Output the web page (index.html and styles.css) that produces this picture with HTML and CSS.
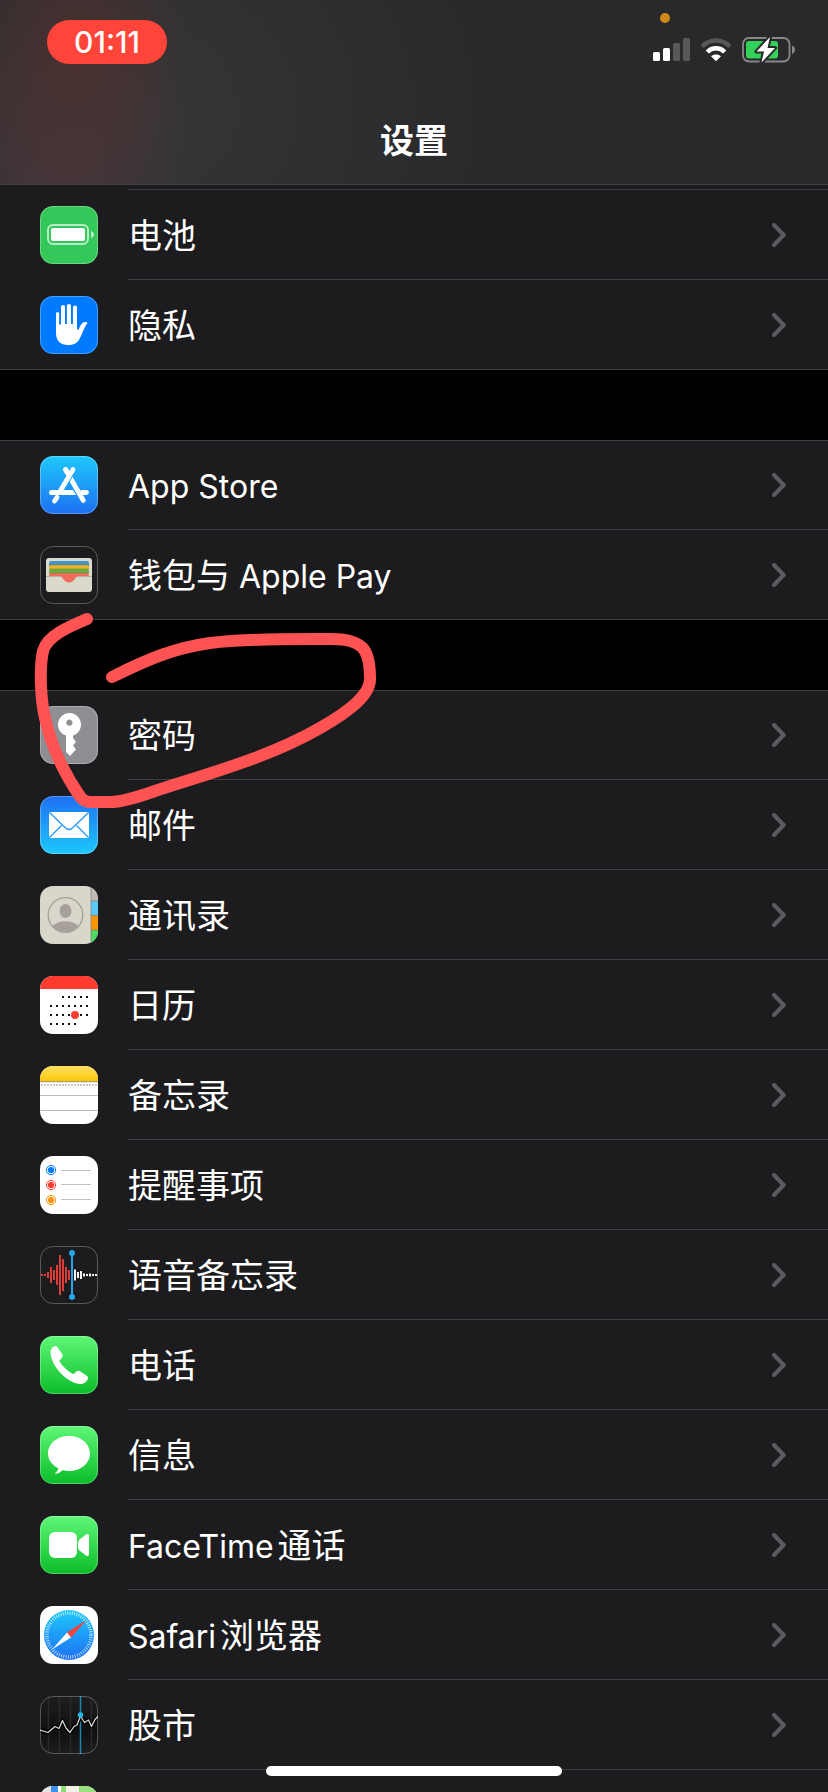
FILE: index.html
```html
<!DOCTYPE html>
<html lang="zh-CN">
<head>
<meta charset="utf-8">
<meta name="viewport" content="width=device-width, initial-scale=1">
<title>设置</title>
<link rel="stylesheet" href="styles.css">
</head>
<body>
<svg class="defs" aria-hidden="true">
  <defs>
    <linearGradient id="g-blue" x1="0" y1="0" x2="0" y2="1"><stop offset="0" stop-color="#1ec8fb"/><stop offset="1" stop-color="#1d70f2"/></linearGradient>
    <linearGradient id="g-notes" x1="0" y1="0" x2="0" y2="1"><stop offset="0" stop-color="#ffe060"/><stop offset="1" stop-color="#fcc60c"/></linearGradient>
    <symbol id="chevron" viewBox="0 0 14 24"><path d="M2 2l9.700 10L2 22" fill="none" stroke="#5b5b60" stroke-width="4" stroke-linecap="round" stroke-linejoin="round"/></symbol>
  </defs>
</svg>
<div class="screen">
  <header class="header">
    <div class="status">
      <span class="clock">01:11</span>
      <span class="mic-dot"></span>
      <div class="indicators">
        <svg width="37" height="24" viewBox="0 0 37 24" role="img" aria-label="信号"><g fill="#fff"><rect y="14" width="7" height="9" rx="1.500"/><rect x="10" y="10" width="7" height="13" rx="1.500"/></g><g fill="#58585a"><rect x="20" y="5" width="7" height="18" rx="1.500"/><rect x="30" width="7" height="23" rx="1.500"/></g></svg>
        <svg width="32" height="24" viewBox="0 0 32 24" role="img" aria-label="Wi-Fi"><path d="M2 8.500C10 .500 22 .500 30 8.500" fill="none" stroke="#58585a" stroke-width="4.500"/><path d="M7.300 14C12 9 20 9 24.700 14" fill="none" stroke="#fff" stroke-width="4.500"/><path d="M11 18.300C13.500 15.900 18.500 15.900 21 18.300L16 23.300Z" fill="#fff"/></svg>
        <svg width="54" height="26" viewBox="0 0 54 26" role="img" aria-label="正在充电"><rect x="1" y="1" width="46.500" height="23.500" rx="6" fill="none" stroke="#88888a" stroke-width="1.800"/><rect x="4" y="4" width="32" height="17.500" rx="3" fill="#32d158"/><path d="M50 8.500c4 1.500 4 7 0 8.500z" fill="#88888a"/><path d="M28 0L14.500 14.500H22L19.500 25.500L33 11H25.500Z" fill="#fff" stroke="#29292b" stroke-width="4" paint-order="stroke" stroke-linejoin="round"/></svg>
      </div>
    </div>
    <h1 class="title">设置</h1>
  </header>

  <main class="content">
    <div class="previous-row"></div>
    <nav class="group group-first">
      <a class="row" href="#battery">
        <svg class="icon ringed green-flat" viewBox="0 0 58 58"><rect x="8" y="19" width="40" height="19" rx="5" fill="none" stroke="#fff" stroke-opacity=".65" stroke-width="2"/><rect x="11" y="22" width="34" height="13" rx="2" fill="#fff"/><path d="M51 25c4 1.500 4 5.500 0 7z" fill="#fff" fill-opacity=".65"/></svg>
        <span class="cell"><span class="label">电池</span><svg class="chevron"><use href="#chevron"/></svg></span>
      </a>
      <a class="row" href="#privacy">
        <svg class="icon ringed blue-flat" viewBox="0 0 58 58"><path fill="#fff" d="M16 17.500a1.600 1.600 0 0 1 3.200 0V28.500h1.800V11a2 2 0 0 1 4 0V28h1.900V10a2 2 0 0 1 4.100 0V28h1.900V11.500a2 2 0 0 1 4.100 0V33l1.500 1C40 30 42 26.500 45 26.100c2-.200 2.900.700 2.300 1.500C44 31.500 42.500 38 39.500 43 37 47.500 33.500 49 28 49c-7.500 0-12-4-12-12z"/></svg>
        <span class="cell"><span class="label">隐私</span><svg class="chevron"><use href="#chevron"/></svg></span>
      </a>
    </nav>

    <nav class="group">
      <a class="row" href="#app-store">
        <svg class="icon ringed sky" viewBox="0 0 58 58"><g fill="none" stroke="#fff" stroke-width="4.800" stroke-linecap="round"><path d="M25.500 13.500L43.300 44.500M42 36.500h4.500"/><path d="M31 16L20.500 34.500" stroke="#1fa2f7" stroke-width="7.500" stroke-linecap="butt"/><path d="M33 13.500L20 35.500M25.500 13.500l3 5M17 41.300L14.500 45"/></g><path d="M11.500 34h21.500l3 5H11.500a2.500 2.500 0 0 1 0-5z" fill="#fff"/></svg>
        <span class="cell"><span class="label"><span class="latin">App Store</span></span><svg class="chevron"><use href="#chevron"/></svg></span>
      </a>
      <a class="row" href="#wallet">
        <svg class="icon ringed dark" viewBox="0 0 58 58"><rect x="6" y="12" width="46" height="34" rx="3" fill="#dbd8cc"/><path d="M9 20v-3q0-2 2-2h36q2 0 2 2v3z" fill="#4595c5"/><path d="M9 23v-2q0-2 2-2h36q2 0 2 2v2z" fill="#eeb12c"/><path d="M9 27v-2q0-2 2-2h36q2 0 2 2v2z" fill="#63b144"/><path d="M9 31v-2q0-2 2-2h36q2 0 2 2v2H37c-2 0-3 5.500-8 5.500S23 31 21 31z" fill="#f16d5e"/><path d="M6 30.500h15M37 30.500h15" stroke="#b5b1a6"/><path d="M9 19h40M9 23h40M9 27h40" stroke="#6b6630" stroke-opacity=".35"/></svg>
        <span class="cell"><span class="label">钱包与<span class="latin"> Apple Pay</span></span><svg class="chevron"><use href="#chevron"/></svg></span>
      </a>
    </nav>

    <nav class="group">
      <a class="row" href="#passwords">
        <svg class="icon ringed gray" viewBox="0 0 58 58"><path fill="#fff" fill-rule="evenodd" d="M26 29.500a11.500 11.500 0 1 1 7 0V32l3 4-3 3.500 3 4-6 6.500-4-4zM29.300 13.600a3.100 3.100 0 1 0 .1 0z"/></svg>
        <span class="cell"><span class="label">密码</span><svg class="chevron"><use href="#chevron"/></svg></span>
      </a>
      <a class="row" href="#mail">
        <svg class="icon ringed mail" viewBox="0 0 58 58"><rect x="9" y="16" width="40" height="26" rx="1.500" fill="#fff"/><path d="M9.500 16.500L24.500 31q4.500 5 9 0L48.500 16.500M9.500 41.500L21.500 29.500M48.500 41.500L36.500 29.500" fill="none" stroke="#2497f6" stroke-width="1.300"/></svg>
        <span class="cell"><span class="label">邮件</span><svg class="chevron"><use href="#chevron"/></svg></span>
      </a>
      <a class="row" href="#contacts">
        <svg class="icon contacts" viewBox="0 0 58 58"><rect x="51" width="7" height="15" fill="#bfbbb1"/><rect x="51" y="15" width="7" height="14.500" fill="#5ac8fa"/><rect x="51" y="29.500" width="7" height="14.500" fill="#ff9500"/><rect x="51" y="44" width="7" height="14" fill="#4cd964"/><path d="M51 0v58M51 15h7M51 29.500h7M51 44h7" stroke="#77736b" stroke-opacity=".6"/><circle cx="25.500" cy="29" r="17.300" fill="none" stroke="#a8a19b" stroke-width="1.300"/><ellipse cx="25.500" cy="25" rx="6" ry="7" fill="#a8a19b"/><path d="M12.500 40c6-6.500 20-6.500 26 0C32 48.500 19 48.500 12.500 40z" fill="#a8a19b"/></svg>
        <span class="cell"><span class="label">通讯录</span><svg class="chevron"><use href="#chevron"/></svg></span>
      </a>
      <a class="row" href="#calendar">
        <svg class="icon white" viewBox="0 0 58 58"><rect width="58" height="13" fill="#ff3b30"/><path d="M22 21h26M10 30h38M10 39h38M10 48h26" fill="none" stroke="#111" stroke-width="2" stroke-dasharray="2 4"/><circle cx="35" cy="39" r="4" fill="#ff3b30"/></svg>
        <span class="cell"><span class="label">日历</span><svg class="chevron"><use href="#chevron"/></svg></span>
      </a>
      <a class="row" href="#notes">
        <svg class="icon white" viewBox="0 0 58 58"><rect width="58" height="15" fill="url(#g-notes)"/><path d="M0 15.500h58" stroke="#b5a060"/><path d="M0 16.500h58" stroke="#e6e4dc"/><path d="M1 19h57" stroke="#c8c8c8" stroke-width="2" stroke-dasharray="2 1"/><path d="M0 29.500h58M0 44.500h58" stroke="#bcbcbe"/></svg>
        <span class="cell"><span class="label">备忘录</span><svg class="chevron"><use href="#chevron"/></svg></span>
      </a>
      <a class="row" href="#reminders">
        <svg class="icon white" viewBox="0 0 58 58"><g fill="#007aff" stroke="#007aff"><circle cx="11" cy="14" r="3.100" stroke="none"/><circle cx="11" cy="14" r="4.600" fill="none"/></g><g fill="#ff3b30" stroke="#ff3b30"><circle cx="11" cy="29" r="3.100" stroke="none"/><circle cx="11" cy="29" r="4.600" fill="none"/></g><g fill="#ff9500" stroke="#ff9500"><circle cx="11" cy="44" r="3.100" stroke="none"/><circle cx="11" cy="44" r="4.600" fill="none"/></g><path d="M21 14.500h30M21 28.500h30M21 43.500h30" stroke="#c0c0c3"/></svg>
        <span class="cell"><span class="label">提醒事项</span><svg class="chevron"><use href="#chevron"/></svg></span>
      </a>
      <a class="row" href="#voice-memos">
        <svg class="icon ringed dark" viewBox="0 0 58 58"><path d="M2 28v2M5 28v2M8 26v6M11 21v16M14 24v10M17 19v20M20 9v40M23 13v32M26 21v16M29 24v10" stroke="#e8403a" stroke-width="1.900"/><path d="M35 23.500v11M38 26v6M41 25v8M44 27.500v3M47 28v2M50 27.500v3M53 28v2M56 28v2" stroke="#fff" stroke-width="1.900"/><path d="M32 7v44" stroke="#22a7ec" stroke-width="2"/><circle cx="32" cy="7" r="3" fill="#22a7ec"/><circle cx="32" cy="51" r="3" fill="#22a7ec"/></svg>
        <span class="cell"><span class="label">语音备忘录</span><svg class="chevron"><use href="#chevron"/></svg></span>
      </a>
      <a class="row" href="#phone">
        <svg class="icon ringed green" viewBox="0 0 58 58"><path fill="#fff" d="M10.500 16c0-2 1-4 3-5.300 1.500-1 3-1 4 .5l4.500 6.500c1 1.500 1 2.500 0 3.800l-2 2.500c-.600.800-.500 1.500 0 2.300 3 4.500 7.500 8.500 12 11.200 1 .600 1.800.500 2.500-.200l2-1.700c1.200-1 2.300-1 3.800-.1l6.700 4.500c1.300 1 1.300 2.200.500 3.700-1.300 2.300-3.500 4-6 4.200C34 48.500 25 42 20 36.500 15 31 10.500 23 10.500 16z"/></svg>
        <span class="cell"><span class="label">电话</span><svg class="chevron"><use href="#chevron"/></svg></span>
      </a>
      <a class="row" href="#messages">
        <svg class="icon ringed green" viewBox="0 0 58 58"><path fill="#fff" d="M29 10c11.800 0 21 7.700 21 17.500S40.800 45 29 45c-2.500 0-4.500-.200-6.500-.800C20.500 46 18 47.700 15.500 47.800c-.5 0-.6-.500-.2-.8 1.700-1.300 2.700-2.500 2.900-4.700C12 39 8 33.800 8 27.500 8 17.700 17.200 10 29 10z"/></svg>
        <span class="cell"><span class="label">信息</span><svg class="chevron"><use href="#chevron"/></svg></span>
      </a>
      <a class="row" href="#facetime">
        <svg class="icon ringed green" viewBox="0 0 58 58"><rect x="9" y="16" width="28" height="26" rx="6" fill="#fff"/><path d="M38 27q0-2 1.500-3.500l6.500-5q3-1.500 3 1.500v18q0 3-3 1.500l-6.500-5Q38 33 38 31z" fill="#fff"/></svg>
        <span class="cell"><span class="label"><span class="latin">FaceTime</span>通话</span><svg class="chevron"><use href="#chevron"/></svg></span>
      </a>
      <a class="row" href="#safari">
        <svg class="icon white" viewBox="0 0 58 58"><circle cx="29" cy="29" r="25" fill="url(#g-blue)"/><circle cx="29" cy="29" r="22" fill="none" stroke="#fff" stroke-opacity=".8" stroke-width="3.500" stroke-dasharray=".8 1.504"/><path d="M46.500 14L27 26.500l4 5z" fill="#fb4238"/><path d="M12 43.500L27 26.500l4 5z" fill="#fff"/></svg>
        <span class="cell"><span class="label"><span class="latin">Safari</span>浏览器</span><svg class="chevron"><use href="#chevron"/></svg></span>
      </a>
      <a class="row" href="#stocks">
        <svg class="icon ringed stocks" viewBox="0 0 58 58"><path d="M8.500 0v58M19.500 0v58M30.500 0v58M51.500 0v58" stroke="#29292b" stroke-width="1.500"/><path d="M40.500 0v58" stroke="#1c86ad" stroke-width="1.500"/><g fill="none" stroke-linejoin="round"><path d="M0 34l8 2.500 7-6 4 2 3.500-8L26 32l4 4.500 4-6 3-1.500 3.500-9 4 6.500 4-2.500 3 6.500 3.500-7 4-4" stroke="#000" stroke-width="4"/><path d="M0 34l8 2.500 7-6 4 2 3.500-8L26 32l4 4.500 4-6 3-1.500 3.500-9 4 6.500 4-2.500 3 6.500 3.500-7 4-4" stroke="#d5d5d5" stroke-width="1.300"/></g><circle cx="40.500" cy="19" r="2.700" fill="#25b7e8"/></svg>
        <span class="cell"><span class="label">股市</span><svg class="chevron"><use href="#chevron"/></svg></span>
      </a>
      <a class="row" href="#maps" aria-label="地图">
        <svg class="icon white" viewBox="0 0 58 58"><rect width="58" height="58" fill="#f4f1e8"/><rect width="11" height="58" fill="#e3e2de"/><rect x="11" width="7" height="58" fill="#3a92ea"/><rect x="18" width="3" height="58" fill="#fff"/><rect x="21" width="5" height="58" fill="#8fdc74"/><rect x="39" width="19" height="58" fill="#98e07c"/></svg>
        <span class="cell"></span>
      </a>
    </nav>
  </main>

  <svg class="scribble" viewBox="0 0 360 200" aria-hidden="true"><path d="M57 9C38 17 17 26 13 41C9 60 11 92 15 108C22 140 35 165 51 188Q55 192 61 192H80Q94 192 125 181C180 163 240 147 290 118C320 101 340 85 340 69C340 43 336 29 302 29C270 29 225 28 180 33C145 38 120 48 82 67"/></svg>
  <div class="home-indicator"></div>
</div>
</body>
</html>
```

FILE: styles.css
```css
* { box-sizing: border-box; }

body {
  margin: 0;
  background: #000;
  color: #fff;
  font-family: Inter, "Noto Sans CJK SC", sans-serif;
  font-size: 34px;
  line-height: 48px;
}

.defs { position: absolute; width: 0; height: 0; }

.screen {
  position: relative;
  display: flex;
  flex-direction: column;
  height: 100vh;
  overflow: hidden;
}

.header {
  flex: none;
  border-bottom: 1px solid #414144;
  background:
    radial-gradient(120px 160px at 75px 50px, rgba(84, 46, 44, .7), rgba(84, 46, 44, 0)),
    radial-gradient(140px 160px at 60px 185px, rgba(78, 56, 62, .7), rgba(78, 56, 62, 0)),
    radial-gradient(360px 320px at 140px 110px, #353637, #29292b);
}

.status {
  position: relative;
  display: flex;
  justify-content: space-between;
  align-items: flex-start;
  padding: 20px 32px 0 47px;
}

.clock {
  width: 120px;
  border-radius: 22px;
  background: #ff453a;
  font-size: 30px;
  font-weight: 500;
  line-height: 44px;
  text-align: center;
}

.mic-dot {
  position: absolute;
  top: 13px;
  right: 158px;
  width: 10px;
  height: 10px;
  border-radius: 50%;
  background: #d38917;
}

.indicators {
  display: flex;
  align-items: center;
  gap: 10px;
  padding-top: 17px;
}

.title {
  margin: 0;
  padding: 53px 0 19px;
  font-size: 34px;
  font-weight: 600;
  text-align: center;
}

.content {
  flex: 1;
  min-height: 0;
  overflow: hidden;
}

.previous-row {
  height: 5px;
  background: linear-gradient(#3d3d41, #3d3d41) 128px 4px / 100% 1px no-repeat #1c1c1e;
}

.group {
  margin-bottom: 70px;
  background: #1c1c1e;
  box-shadow: inset 0 1px #3d3d41, inset 0 -1px #3d3d41;
}

.group-first { box-shadow: inset 0 -1px #3d3d41; }

.row {
  display: flex;
  align-items: center;
  gap: 30px;
  padding-left: 40px;
  color: inherit;
  text-decoration: none;
}

.icon {
  flex: none;
  width: 58px;
  height: 58px;
  border-radius: 13px;
}

.ringed {
  outline: 1px solid rgba(255, 255, 255, .27);
  outline-offset: -1px;
}

.green-flat { background: #34c759; }
.blue-flat { background: #007aff; }
.sky { background: linear-gradient(#1ec8fb, #1d70f2); }
.mail { background: linear-gradient(#1d70f2, #1ec8fb); }
.green { background: linear-gradient(#5ff777, #0bbd29); }
.gray { background: #8e8e93; }
.dark { background: #1c1c1e; }
.stocks { background: linear-gradient(#1e1e20, #101011 60%, #1c1c1e); }
.white { background: #fff; }
.contacts { background: #d9d6cb; }

.cell {
  display: flex;
  flex: 1;
  align-items: center;
  justify-content: space-between;
  min-height: 90px;
  padding-right: 42px;
  border-bottom: 1px solid #3d3d41;
}

.row:last-child .cell { border-bottom-color: transparent; }

.label {
  padding-top: 3px;
  text-autospace: normal;
}

.latin { font-size: 32px; }

.chevron {
  flex: none;
  width: 14px;
  height: 24px;
}

.scribble {
  position: absolute;
  top: 610px;
  left: 30px;
  width: 360px;
  height: 200px;
  fill: none;
  stroke: #ff5252;
  stroke-width: 12px;
  stroke-linecap: round;
  stroke-linejoin: round;
  pointer-events: none;
}

.home-indicator {
  position: absolute;
  bottom: 16px;
  left: 50%;
  width: 296px;
  height: 10px;
  margin-left: -148px;
  border-radius: 5px;
  background: #fff;
}
```
